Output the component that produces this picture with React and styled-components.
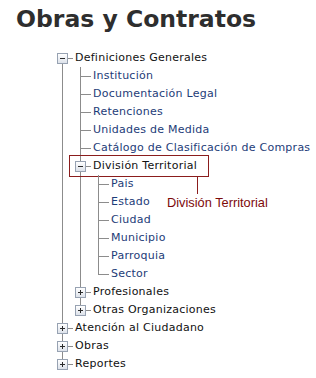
import React from 'react';
import styled, { createGlobalStyle, css } from 'styled-components';

const GlobalStyle = createGlobalStyle`
  html, body {
    margin: 0;
    padding: 0;
    background: #ffffff;
  }
  body {
    font-family: "DejaVu Sans", Verdana, sans-serif;
  }
`;

const tree = [
  {
    label: 'Definiciones Generales',
    open: true,
    children: [
      { label: 'Institución', link: true },
      { label: 'Documentación Legal', link: true },
      { label: 'Retenciones', link: true },
      { label: 'Unidades de Medida', link: true },
      { label: 'Catálogo de Clasificación de Compras', link: true },
      {
        label: 'División Territorial',
        open: true,
        note: 'División Territorial',
        children: [
          { label: 'Pais', link: true },
          { label: 'Estado', link: true },
          { label: 'Ciudad', link: true },
          { label: 'Municipio', link: true },
          { label: 'Parroquia', link: true },
          { label: 'Sector', link: true },
        ],
      },
      { label: 'Profesionales', children: [] },
      { label: 'Otras Organizaciones', children: [] },
    ],
  },
  { label: 'Atención al Ciudadano', children: [] },
  { label: 'Obras', children: [] },
  { label: 'Reportes', children: [] },
];

const Page = styled.div`
  padding: 6px 0 20px;
`;

const Title = styled.h1`
  margin: 0 0 16px 16px;
  font-family: "DejaVu Sans", Verdana, sans-serif;
  font-size: 23.5px;
  line-height: 27px;
  font-weight: bold;
  color: #2e2e2e;
`;

const List = styled.ul`
  list-style: none;
  margin: 0;
  padding: 0 0 0 ${p => (p.$root ? 57 : 18)}px;
`;

const Item = styled.li`
  position: relative;

  &::before {
    content: '';
    position: absolute;
    left: 5px;
    top: 0;
    bottom: 0;
    border-left: 1px solid #8c8c8c;
  }

  ${p => p.$first && css`
    &::before { top: 9px; }
  `}

  &:last-child::before {
    bottom: auto;
    height: 10px;
  }
`;

const Row = styled.div`
  position: relative;
  display: flex;
  align-items: center;
  height: 18px;

  &::before {
    content: '';
    position: absolute;
    left: 5px;
    top: 9px;
    width: 11px;
    border-top: 1px solid #8c8c8c;
  }
`;

const Gutter = styled.span`
  flex: none;
  display: flex;
  align-items: center;
  width: 18px;
  height: 18px;
`;

const Toggle = styled.span`
  position: relative;
  z-index: 1;
  width: 11px;
  height: 11px;
  margin-top: 1px;
  box-sizing: border-box;
  border: 1px solid #97a2b2;
  background: linear-gradient(#ffffff, #dde2ea);

  &::before {
    content: '';
    position: absolute;
    left: 2px;
    top: 4px;
    width: 5px;
    height: 1px;
    background: #2b2b2b;
  }

  ${p => !p.$open && css`
    &::after {
      content: '';
      position: absolute;
      left: 4px;
      top: 2px;
      width: 1px;
      height: 5px;
      background: #2b2b2b;
    }
  `}
`;

const Label = styled.span`
  font-size: 11px;
  line-height: 18px;
  white-space: nowrap;
  color: ${p => (p.$link ? '#1d3c78' : '#111111')};
  letter-spacing: 0.25px;
`;

const Callout = styled.span`
  position: absolute;
  left: -6px;
  top: -2px;
  display: flex;
  flex-direction: column;
  align-items: flex-start;
  pointer-events: none;
`;

const Frame = styled.span`
  width: 140px;
  height: 22px;
  box-sizing: border-box;
  border: 1px solid #8b1d1d;
`;

const Stem = styled.span`
  width: 1px;
  height: 17px;
  margin-left: 128px;
  background: #8b1d1d;
`;

const Note = styled.span`
  margin: 2px 0 0 98px;
  font-family: "Liberation Sans", Arial, sans-serif;
  font-size: 12.8px;
  line-height: 14px;
  color: #7d0a0a;
  white-space: nowrap;
`;

const Node = ({ node, first }) => {
  const hasToggle = Array.isArray(node.children);
  return (
    <Item $first={first}>
      <Row>
        <Gutter>{hasToggle && <Toggle $open={node.open} />}</Gutter>
        <Label $link={node.link}>{node.label}</Label>
        {node.note && (
          <Callout>
            <Frame />
            <Stem />
            <Note>{node.note}</Note>
          </Callout>
        )}
      </Row>
      {node.open && node.children.length > 0 && (
        <List>
          {node.children.map(child => (
            <Node key={child.label} node={child} />
          ))}
        </List>
      )}
    </Item>
  );
};

const App = () => (
  <Page>
    <GlobalStyle />
    <Title>Obras y Contratos</Title>
    <List $root>
      {tree.map((node, i) => (
        <Node key={node.label} node={node} first={i === 0} />
      ))}
    </List>
  </Page>
);

export default App;
